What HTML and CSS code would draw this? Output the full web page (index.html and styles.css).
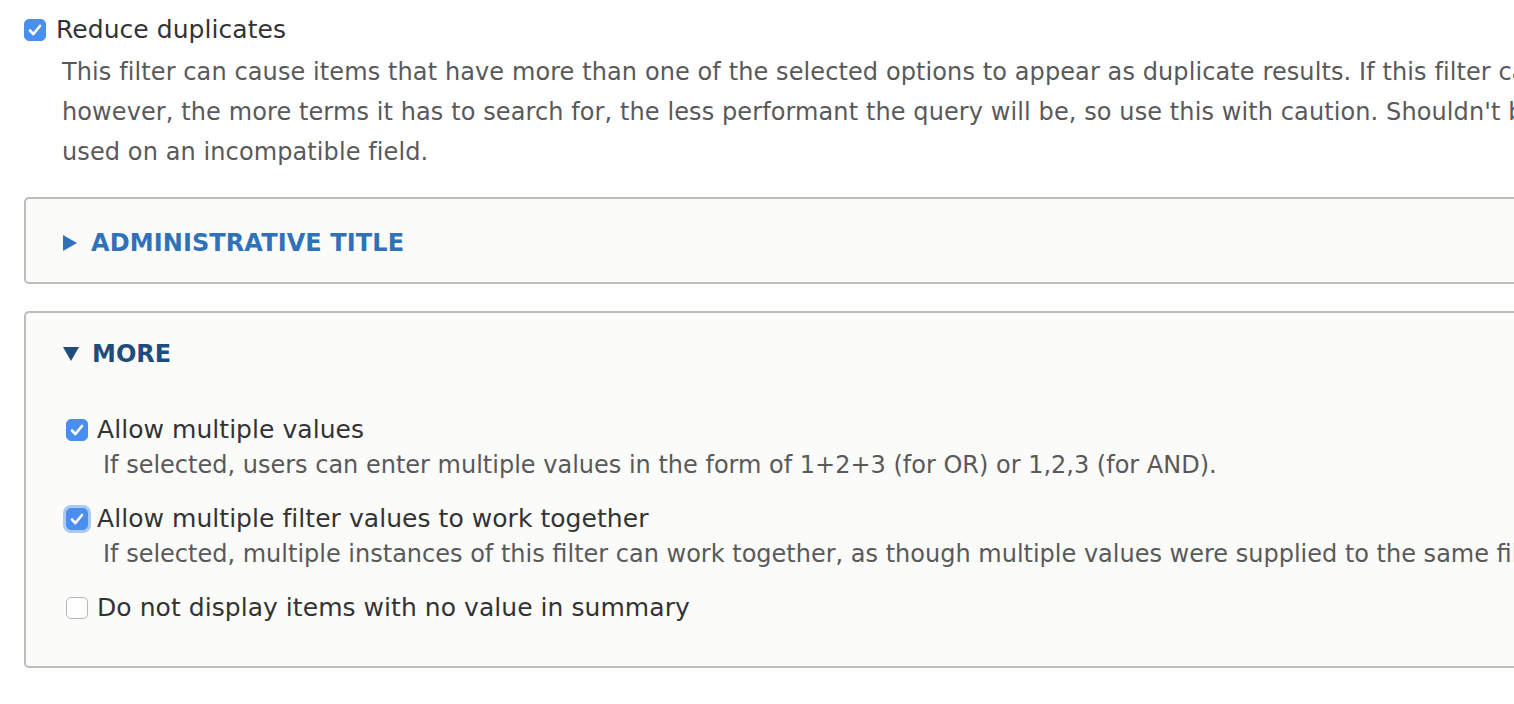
FILE: index.html
```html
<!DOCTYPE html>
<html lang="en">
<head>
<meta charset="utf-8">
<title>Filter settings</title>
<link rel="stylesheet" href="styles.css">
</head>
<body>
<div class="page">
  <div class="form-item top-item">
    <label class="option">
      <span class="cb checked"><svg viewBox="0 0 22 22"><path d="M6 11.5l3.3 3.6L16 7" /></svg></span>
      <span class="option-text">Reduce duplicates</span>
    </label>
    <div class="description desc-top">This filter can cause items that have more than one of the selected options to appear as duplicate results. If this filter causes duplicate results to occur, this checkbox can reduce those duplicates;<br>however, the more terms it has to search for, the less performant the query will be, so use this with caution. Shouldn't be set on single-value fields, as it may cause values to disappear from display, if<br>used on an incompatible field.</div>
  </div>

  <div class="fieldset collapsed">
    <div class="legend"><span class="tri tri-right"></span><span class="legend-text">ADMINISTRATIVE TITLE</span></div>
  </div>

  <div class="fieldset open">
    <div class="legend"><span class="tri tri-down"></span><span class="legend-text">MORE</span></div>
    <div class="fieldset-body">
      <div class="form-item">
        <label class="option">
          <span class="cb checked"><svg viewBox="0 0 22 22"><path d="M6 11.5l3.3 3.6L16 7" /></svg></span>
          <span class="option-text">Allow multiple values</span>
        </label>
        <div class="description">If selected, users can enter multiple values in the form of 1+2+3 (for OR) or 1,2,3 (for AND).</div>
      </div>
      <div class="form-item">
        <label class="option">
          <span class="cb checked focused"><svg viewBox="0 0 22 22"><path d="M6 11.5l3.3 3.6L16 7" /></svg></span>
          <span class="option-text">Allow multiple filter values to work together</span>
        </label>
        <div class="description">If selected, multiple instances of this filter can work together, as though multiple values were supplied to the same filter. This setting is not compatible with the "Reduce duplicates" feature.</div>
      </div>
      <div class="form-item">
        <label class="option">
          <span class="cb"></span>
          <span class="option-text">Do not display items with no value in summary</span>
        </label>
      </div>
    </div>
  </div>
</div>
</body>
</html>
```

FILE: styles.css
```css
html, body {
  margin: 0;
  padding: 0;
  background: #ffffff;
  overflow: hidden;
}
body {
  font-family: "DejaVu Sans", "Liberation Sans", sans-serif;
  color: #333333;
}
.page {
  width: 2600px;
  padding: 19px 0 0 24px;
}
.form-item {
  display: flex;
  flex-direction: column;
}
.option {
  display: flex;
  align-items: center;
  gap: 10px;
  height: 22px;
}
.option-text {
  font-size: 25px;
  letter-spacing: 0.05px;
  line-height: 22px;
  color: #333333;
  white-space: nowrap;
}
.cb {
  width: 22px;
  height: 22px;
  box-sizing: border-box;
  border-radius: 5px;
  border: 1px solid #b5b5b5;
  background: #ffffff;
  flex: none;
  display: flex;
  align-items: center;
  justify-content: center;
}
.cb.checked {
  background: #4a8ff0;
  border-color: #4a8ff0;
}
.cb.focused {
  box-shadow: 0 0 0 3px #a9c9f6;
}
.cb svg {
  width: 22px;
  height: 22px;
  flex: none;
  fill: none;
  stroke: #ffffff;
  stroke-width: 2.6;
  stroke-linecap: round;
  stroke-linejoin: round;
}
.description {
  font-size: 24px;
  letter-spacing: 0.1px;
  color: #595959;
  white-space: nowrap;
}
.desc-top {
  margin: 11px 0 0 38px;
  line-height: 40px;
}
.fieldset {
  width: 1700px;
  border: 2px solid #bdbdbd;
  border-radius: 5px;
  background: #fbfbfa;
  box-sizing: border-box;
}
.collapsed {
  margin-top: 25px;
  height: 87px;
  display: flex;
  align-items: center;
  padding-top: 4px;
}
.open {
  margin-top: 27px;
  height: 357px;
  padding-top: 26px;
}
.legend {
  display: flex;
  align-items: center;
  gap: 14px;
  padding-left: 37px;
  height: 30px;
}
.legend-text {
  font-size: 24px;
  font-weight: bold;
  letter-spacing: 0.1px;
  line-height: 30px;
  color: #2f72ba;
}
.open .legend-text {
  color: #1e4d7c;
  letter-spacing: 0;
}
.tri {
  width: 0;
  height: 0;
  flex: none;
}
.tri-right {
  border-top: 8px solid transparent;
  border-bottom: 8px solid transparent;
  border-left: 14px solid #2f72ba;
}
.tri-down {
  border-left: 8px solid transparent;
  border-right: 8px solid transparent;
  border-top: 14px solid #1e4d7c;
}
.open .legend {
  gap: 13px;
}
.fieldset-body {
  padding: 50px 0 0 40px;
  display: flex;
  flex-direction: column;
  gap: 29px;
}
.fieldset-body .description {
  margin: 10px 0 0 37px;
  line-height: 28px;
  letter-spacing: 0;
}
.fieldset-body .option {
  gap: 9px;
}
```
